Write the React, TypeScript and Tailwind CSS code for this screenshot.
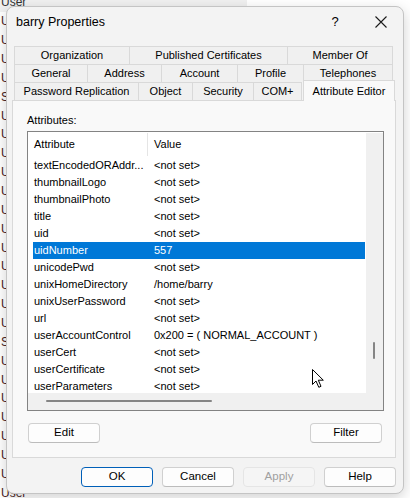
import React from 'react';

type Tab = { label: string; w: string; last?: boolean };

const tabRows: Tab[][] = [
  [
    { label: 'Organization', w: 'w-[115px]' },
    { label: 'Published Certificates', w: 'w-[158px]' },
    { label: 'Member Of', w: 'w-[106px]', last: true },
  ],
  [
    { label: 'General', w: 'w-[73px]' },
    { label: 'Address', w: 'w-[74px]' },
    { label: 'Account', w: 'w-[76px]' },
    { label: 'Profile', w: 'w-[66px]' },
    { label: 'Telephones', w: 'w-[90px]', last: true },
  ],
];

const bottomTabs: Tab[] = [
  { label: 'Password Replication', w: 'w-[124px]' },
  { label: 'Object', w: 'w-[54px]' },
  { label: 'Security', w: 'w-[61px]' },
  { label: 'COM+', w: 'w-[49px]', last: true },
];

const attributes: [string, string][] = [
  ['textEncodedORAddr...', '<not set>'],
  ['thumbnailLogo', '<not set>'],
  ['thumbnailPhoto', '<not set>'],
  ['title', '<not set>'],
  ['uid', '<not set>'],
  ['uidNumber', '557'],
  ['unicodePwd', '<not set>'],
  ['unixHomeDirectory', '/home/barry'],
  ['unixUserPassword', '<not set>'],
  ['url', '<not set>'],
  ['userAccountControl', '0x200 = ( NORMAL_ACCOUNT )'],
  ['userCert', '<not set>'],
  ['userCertificate', '<not set>'],
  ['userParameters', '<not set>'],
];

// rows of the user list sitting behind the dialog; only the first letters peek out
const backgroundRows = [
  'U', 'U', 'U', 'U', 'S', 'U', 'U', 'U', 'U', 'U',
  'U', 'U', 'U', 'U', 'U', 'U', 'U', 'S', 'U', 'U',
  'U', 'U', 'U', 'U', 'U', 'User', 'User',
];

const TabButton: React.FC<{ tab: Tab }> = ({ tab }) => (
  <div
    className={`${tab.w} h-[18px] flex items-center justify-center border-t border-l border-[#d9d9d9] bg-[#f0f0f0] whitespace-nowrap ${tab.last ? 'border-r' : ''}`}
  >
    {tab.label}
  </div>
);

const Button: React.FC<{ label: string; primary?: boolean; disabled?: boolean }> = ({ label, primary, disabled }) => (
  <button
    className={`w-[72px] h-[20px] rounded-[4px] border flex items-center justify-center text-[11.5px] ${
      primary
        ? 'border-[#005fb8] bg-[#fdfdfd] text-black'
        : disabled
        ? 'border-[#e5e5e5] bg-[#f5f5f5] text-[#a0a0a0]'
        : 'border-[#d0d0d0] border-b-[#bcbcbc] bg-[#fdfdfd] text-black'
    }`}
  >
    {label}
  </button>
);

const Cursor = () => (
  <svg width="14" height="20" viewBox="0 0 14 20" className="absolute left-[312px] top-[369px]">
    <path d="M0.5 0.5 L0.5 15.5 L4 12 L6.8 18.3 L9 17.3 L6.3 11.2 L11.3 11.2 Z" fill="#fff" stroke="#000" strokeWidth="1" strokeLinejoin="round" />
  </svg>
);

const AttributeList = () => (
  <div className="ml-[14px] mt-[4px] w-[357px] h-[280px] border border-[#838383] flex flex-col bg-white">
    <div className="flex h-[261px]">
      <div className="w-[338px] overflow-hidden">
        <div className="ml-[5px] flex h-[25px] items-center">
          <div className="w-[115px] h-[23px] flex items-center pl-px border-r border-[#e5e5e5]">Attribute</div>
          <div className="pl-[6px]">Value</div>
        </div>
        {attributes.map(([name, value]) => {
          const selected = name === 'uidNumber';
          return (
            <div
              key={name}
              className={`ml-[5px] w-[332px] h-[17px] flex items-center whitespace-nowrap ${selected ? 'bg-[#0078d7] text-white' : ''}`}
            >
              <div className="w-[115px] pl-px">{name}</div>
              <div className="pl-[6px]">{value}</div>
            </div>
          );
        })}
      </div>
      {/* vertical scrollbar */}
      <div className="w-[17px] mt-px bg-[#f0f0f0] relative">
        <div className="absolute left-[7px] top-[209px] w-[2px] h-[17px] rounded-full bg-[#858585]" />
      </div>
    </div>
    {/* horizontal scrollbar */}
    <div className="h-[17px] bg-[#f0f0f0] relative">
      <div className="absolute left-[18px] top-[7px] w-[166px] h-[2px] rounded-full bg-[#858585]" />
    </div>
  </div>
);

const PropertiesDialog = () => (
  <div className="absolute left-[6px] top-[6px] w-[398px] h-[488px] rounded-[8px] border border-[#c4c4c4] bg-[#f3f3f3] shadow-[0_4px_14px_rgba(0,0,0,0.18)] flex flex-col overflow-hidden">
    <div className="h-[30px] flex items-center">
      <div className="pl-[9px] text-[12.5px] flex-1">barry Properties</div>
      <div className="w-[46px] h-full flex items-center justify-center text-[13px]">?</div>
      <div className="w-[45px] h-full flex items-center justify-center">
        <svg width="12" height="12" viewBox="0 0 12 12">
          <path d="M0.5 0.5 L11.5 11.5 M11.5 0.5 L0.5 11.5" stroke="#1a1a1a" strokeWidth="1.1" />
        </svg>
      </div>
    </div>

    <div className="mt-[9px] pl-[7px] flex flex-col">
      {tabRows.map((row, i) => (
        <div key={i} className="flex">
          {row.map(tab => (
            <TabButton key={tab.label} tab={tab} />
          ))}
        </div>
      ))}
      <div className="flex items-end">
        {bottomTabs.map(tab => (
          <TabButton key={tab.label} tab={tab} />
        ))}
        <div className="relative z-10 ml-px w-[92px] h-[21px] -mt-[3px] -mb-px flex items-center justify-center border-t border-l border-r border-[#d9d9d9] bg-[#f9f9f9] whitespace-nowrap">
          Attribute Editor
        </div>
      </div>
    </div>

    <div className="ml-[5px] w-[384px] h-[358px] border border-[#d9d9d9] bg-[#f9f9f9] flex flex-col">
      <div className="mt-[13px] pl-[14px] h-[13px] leading-[13px]">Attributes:</div>
      <AttributeList />
      <div className="mt-[12px] pl-[15px] pr-[13px] flex justify-between">
        <Button label="Edit" />
        <Button label="Filter" />
      </div>
    </div>

    <div className="mt-[9px] pr-[7px] flex justify-end gap-[9px]">
      <Button label="OK" primary />
      <Button label="Cancel" />
      <Button label="Apply" disabled />
      <Button label="Help" />
    </div>
  </div>
);

export default function App() {
  return (
    <div className="relative w-[410px] h-[498px] overflow-hidden bg-white font-['Liberation_Sans',Arial,sans-serif] text-[11px] text-black">
      {/* directory listing behind the dialog */}
      <div className="-mt-[7px] flex flex-col">
        <div className="h-[18.86px] w-[247px] bg-[#f0f0f0] flex items-center pl-px text-[12px] text-[#333]">User</div>
        {backgroundRows.map((r, i) => (
          <div key={i} className="h-[18.86px] flex items-center pl-px text-[12px] text-[#4a1c1c] whitespace-nowrap">
            {r}
          </div>
        ))}
      </div>
      <PropertiesDialog />
      <Cursor />
    </div>
  );
}
